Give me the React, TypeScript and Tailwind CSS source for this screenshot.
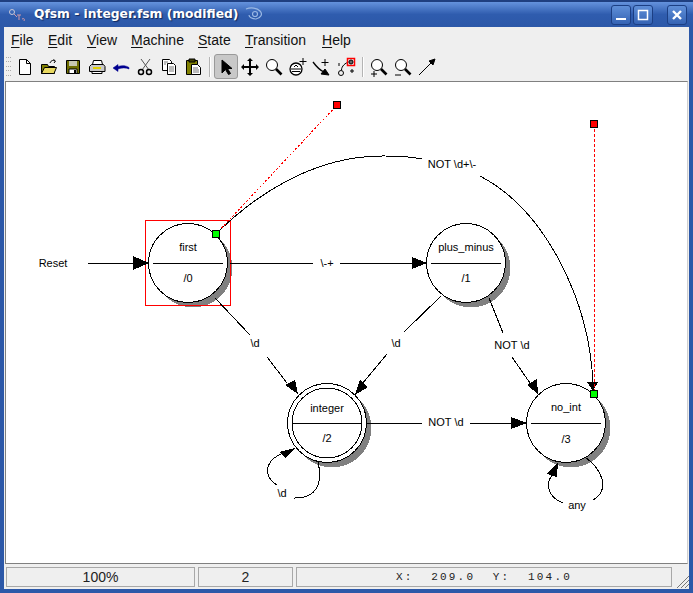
import React from 'react';

const sans = '"Liberation Sans", Arial, sans-serif';

const menus = [
  ['F', 'ile', 'w-[37px]'],
  ['E', 'dit', 'w-[39px]'],
  ['V', 'iew', 'w-[44px]'],
  ['M', 'achine', 'w-[67px]'],
  ['S', 'tate', 'w-[47px]'],
  ['T', 'ransition', 'w-[77px]'],
  ['H', 'elp', 'w-[40px]'],
];

const Glyph: React.FC<{ children: React.ReactNode; active?: boolean }> = ({ children, active }) => (
  <div
    className={
      active
        ? 'w-[24px] h-[25px] flex items-center justify-center rounded-[3px] border border-[#9a9a9a] bg-[#c8c8c8]'
        : 'w-[24px] h-[25px] flex items-center justify-center'
    }
  >
    <svg width="20" height="20" viewBox="0 0 20 20" fill="none" stroke="#000" strokeWidth="1">
      {children}
    </svg>
  </div>
);

const Sep = () => (
  <div className="w-[9px] h-[25px] flex items-center justify-center">
    <div className="w-[2px] h-[20px] border-l border-[#b4b4b4] bg-white" />
  </div>
);

const Lens = () => (
  <>
    <circle cx="8" cy="8" r="5.5" fill="#fff" />
    <path d="M12 12l5.5 5.5" strokeWidth="2.6" />
  </>
);

const Toolbar = () => (
  <div className="h-[29px] flex items-center shrink-0">
    <div className="w-[7px] h-[22px] mr-[2px] flex flex-col justify-between py-[1px]">
      <div className="h-[2px] w-[5px] ml-[2px] border-t border-dotted border-[#aaa]" />
      <div className="h-[2px] w-[5px] ml-[2px] border-t border-dotted border-[#aaa]" />
      <div className="h-[2px] w-[5px] ml-[2px] border-t border-dotted border-[#aaa]" />
      <div className="h-[2px] w-[5px] ml-[2px] border-t border-dotted border-[#aaa]" />
      <div className="h-[2px] w-[5px] ml-[2px] border-t border-dotted border-[#aaa]" />
    </div>
    <Glyph>
      <path d="M4.5 2.5h7l4 4v11h-11z" fill="#fff" />
      <path d="M11.5 2.5v4h4" />
    </Glyph>
    <Glyph>
      <path d="M2.5 7.5h6l1 2h6v7h-13z" fill="#808000" />
      <path d="M2.5 16.5l3-6h12l-2.500 6z" fill="#e8d860" />
      <path d="M11 6c1-3 4-3 5-2M14.500 2.500l2 1.500-1.500 2" />
    </Glyph>
    <Glyph>
      <path d="M3.500 3.500h13v13h-13z" fill="#6f6f00" />
      <path d="M6 4h8v5h-8z" fill="#c8c8b0" stroke="none" />
      <path d="M6 12h8v4.500h-8z" fill="#fff" />
      <path d="M11 13h2v3h-2z" fill="#000" stroke="none" />
    </Glyph>
    <Glyph>
      <path d="M6.500 3.500h8l1 4h-10z" fill="#fff" />
      <path d="M2.500 9.500l2-2h12l1.500 2v5h-15.500z" fill="#c8c8c8" />
      <path d="M5 14.500h10v2h-10z" fill="#fff" />
      <path d="M6 11h8" stroke="#e0d000" strokeWidth="2" />
    </Glyph>
    <Glyph>
      <path d="M2 11l5-3.500v2c4-1.500 8-1 11 1v1.500c-3-1.500-7-1.500-11 0v2.500z" fill="#000090" stroke="#000090" strokeWidth="0.500" />
    </Glyph>
    <Glyph>
      <path d="M15 2L7 13M6 2l8 11" strokeWidth="1" stroke="#555" />
      <circle cx="6" cy="15" r="2.500" strokeWidth="1.500" />
      <circle cx="14" cy="15" r="2.500" strokeWidth="1.500" />
    </Glyph>
    <Glyph>
      <path d="M3.500 2.500h7l2 2v9h-9z" fill="#fff" />
      <path d="M8.500 6.500h6l2 2v9h-8z" fill="#fff" />
      <path d="M10 10h5M10 12h5M10 14h5M5 5h4M5 7h2" stroke="#777" />
    </Glyph>
    <Glyph>
      <path d="M3.500 3.500h11v14h-11z" fill="#808000" />
      <path d="M6 2h6v3h-6z" fill="#404000" />
      <path d="M8.500 7.500h6l3 3v7h-9z" fill="#fff" />
      <path d="M10 11h5M10 13h6M10 15h6" stroke="#777" />
    </Glyph>
    <Sep />
    <Glyph active>
      <path d="M6 3v13l3.500-3.500 3 5 2-1-3-5h4.500z" fill="#000" />
    </Glyph>
    <Glyph>
      <path d="M10 2v16M2 10h16" strokeWidth="2" />
      <path d="M10 1l-3 3h6zM10 19l-3-3h6zM1 10l3-3v6zM19 10l-3-3v6z" fill="#000" stroke="none" />
    </Glyph>
    <Glyph>
      <Lens />
    </Glyph>
    <Glyph>
      <circle cx="8" cy="12" r="6" fill="#fff" strokeWidth="1.300" />
      <path d="M3 12h10M4 14.500h8M6 10l2-2 2 2" />
      <path d="M15 1v7M11.500 4.500h7" />
    </Glyph>
    <Glyph>
      <path d="M1 5c3 4 6 8 11 10" strokeWidth="1.300" />
      <path d="M17 18l-8-1 4-5z" fill="#000" />
      <path d="M13 2v7M9.500 5.500h7" />
    </Glyph>
    <Glyph>
      <circle cx="5" cy="16" r="2.500" />
      <path d="M5.500 13c0-4 4-7 7-8" />
      <path d="M3 6v3M15 13h2v2h-2z" />
      <rect x="11.500" y="1.500" width="7" height="7" stroke="#f00" strokeWidth="1.500" />
      <circle cx="15" cy="5" r="2" fill="#666" />
    </Glyph>
    <Sep />
    <Glyph>
      <Lens />
      <path d="M5 14v6M2 17h6" />
    </Glyph>
    <Glyph>
      <Lens />
      <path d="M2 18h6" />
    </Glyph>
    <Glyph>
      <path d="M2 18L15 5" />
      <path d="M18 2l-6 2 4 4z" fill="#000" />
    </Glyph>
  </div>
);

const states = [
  { x: 188, y: 263, name: 'first', out: '/0', ny: 251, oy: 282 },
  { x: 466, y: 263, name: 'plus_minus', out: '/1', ny: 251, oy: 282 },
  { x: 327, y: 423, name: 'integer', out: '/2', ny: 412, oy: 442 },
  { x: 566, y: 423, name: 'no_int', out: '/3', ny: 411, oy: 443 },
];

const labels: [number, number, string][] = [
  [53, 267, 'Reset'],
  [327, 267, '\\-+'],
  [452, 168, 'NOT \\d+\\-'],
  [255, 347, '\\d'],
  [396, 347, '\\d'],
  [512, 349, 'NOT \\d'],
  [446, 426, 'NOT \\d'],
  [282, 497, '\\d'],
  [577, 509, 'any'],
];

const arrows = [
  '133,256 149,263 133,270',
  '412,257 427,263 412,269',
  '298,394 285,385 295,380',
  '355,395 360,380 368,387',
  '538,394 527,385 537,379',
  '527,423 511,417 511,429',
  '593,391 587,382 598,382',
  '295,448 279,452 285,458',
  '558,462 547,474 557,477',
];

const wires = [
  'M88 263H133',
  'M230 263H313M340 263H412',
  'M366 423H422M470 423H511',
  'M215 298L250 335M267 357L287 383',
  'M441 296L404 332M387 354L362 384',
  'M489 298L503 333M512 357L532 386',
  'M216 234C250 200 310 155 385 156C400 156 412 157 422 159',
  'M480 176C545 210 590 300 593 385',
  'M318 462C323 482 318 499 293 498',
  'M277 485C265 478 262 462 283 453',
  'M585 457C603 470 610 490 593 500',
  'M563 503C548 497 545 485 552 475',
];

const Diagram = () => (
  <svg width="681" height="481" viewBox="6 82 681 481" className="block" style={{ fontFamily: sans }}>
    <g shapeRendering="crispEdges">
      {states.map((s) => (
        <circle key={s.name} cx={s.x + 5} cy={s.y + 5} r="39.500" fill="#808080" />
      ))}
      {states.map((s) => (
        <g key={s.name} stroke="#000" fill="#fff">
          <circle cx={s.x} cy={s.y} r="39.500" />
          {s.name === 'integer' && <circle cx={s.x} cy={s.y} r="35" />}
          <path d={`M${s.x - 35} ${s.y}H${s.x + 35}`} />
        </g>
      ))}
      <rect x="145.500" y="220.500" width="85" height="85" fill="none" stroke="#f00" />
      {wires.map((d) => (
        <path key={d} d={d} fill="none" stroke="#000" />
      ))}
      {arrows.map((p) => (
        <polygon key={p} points={p} fill="#000" />
      ))}
      <path d="M216 234L337 105" stroke="#f00" strokeDasharray="2 2" />
      <path d="M594.500 124V394" stroke="#ff0000" strokeDasharray="3 2" fill="none" />
      <rect x="333.500" y="101.500" width="7" height="7" fill="#f00" stroke="#000" />
      <rect x="590.500" y="120.500" width="7" height="7" fill="#f00" stroke="#000" />
      <rect x="212.500" y="230.500" width="7" height="7" fill="#0f0" stroke="#000" />
      <rect x="590.500" y="390.500" width="7" height="7" fill="#0f0" stroke="#000" />
    </g>
    <g fontSize="11" textAnchor="middle" fill="#000">
      {states.map((s) => (
        <g key={s.name}>
          <text x={s.x} y={s.ny}>{s.name}</text>
          <text x={s.x} y={s.oy}>{s.out}</text>
        </g>
      ))}
      {labels.map(([x, y, t]) => (
        <text key={`${x}-${y}`} x={x} y={y}>{t}</text>
      ))}
    </g>
  </svg>
);

const WinBtn: React.FC<{ children: React.ReactNode; className?: string }> = ({ children, className }) => (
  <div
    className={`w-[20px] h-[20px] rounded-[3px] border border-[#1c3f84] bg-gradient-to-b from-[#5f8fd8] to-[#3563b4] flex items-center justify-center ${className ?? ''}`}
  >
    <svg width="14" height="14" viewBox="0 0 14 14" fill="none" stroke="#fff" strokeWidth="2">
      {children}
    </svg>
  </div>
);

export default function App() {
  return (
    <div className="w-[693px] h-[593px] flex flex-col overflow-hidden bg-[#2c58a8]" style={{ fontFamily: sans }}>
      <div className="h-[27px] flex items-center border-t-2 border-[#1f3f80] bg-gradient-to-b from-[#6593dd] via-[#2f5cae] to-[#2c58a8] pl-[8px] pr-[6px] shrink-0">
        <svg width="18" height="16" viewBox="0 0 18 16" fill="none" stroke="#d09aa8" strokeWidth="1">
          <circle cx="4" cy="5" r="2.500" stroke="#c8c8d8" />
          <path d="M6 7l3 3M9 8h4M11 8v5M14 12c2-1 3 0 2 2" />
        </svg>
        <span className="ml-[8px] text-white text-[12.3px] font-bold whitespace-nowrap [text-shadow:1px_1px_1px_#10275a]" style={{ fontFamily: '"DejaVu Sans", sans-serif' }}>
          Qfsm - integer.fsm (modified)
        </span>
        <svg className="ml-[7px]" width="18" height="18" viewBox="0 0 18 18" fill="none" stroke="#9ab8e4" strokeWidth="1.200">
          <path d="M1 3c5-2 11-1 14 2 3 3 1 7-4 8-4 0-7-2-7-4" />
          <circle cx="10" cy="8" r="2.500" />
        </svg>
        <div className="flex-1" />
        <WinBtn>
          <path d="M2 11h10" />
        </WinBtn>
        <WinBtn className="ml-[2px]">
          <rect x="2.500" y="2.500" width="9" height="9" strokeWidth="1.500" />
        </WinBtn>
        <WinBtn className="ml-[14px]">
          <path d="M3 3l8 8M11 3l-8 8" strokeWidth="2.400" />
        </WinBtn>
      </div>

      <div className="flex-1 mx-[4px] mb-[4px] bg-[#efefef] flex flex-col min-h-0">
        <div className="h-[25px] flex items-center pl-[7px] pt-[2px] text-[14px] text-[#111] shrink-0">
          {menus.map(([key, rest, w]) => (
            <span key={key} className={`${w} whitespace-nowrap`}>
              <span className="underline underline-offset-2">{key}</span>
              {rest}
            </span>
          ))}
        </div>
        <Toolbar />
        <div className="h-[483px] mx-[1px] border border-t-[#808080] border-l-[#808080] border-r-[#d0d0d0] border-b-[#808080] bg-white overflow-hidden shrink-0">
          <Diagram />
        </div>
        <div className="h-[20px] mt-[3px] ml-[2px] flex items-stretch gap-[3px] relative text-[14px] text-[#222]">
          <div className="w-[189px] border border-[#a8a8a8] flex items-center justify-center">100%</div>
          <div className="w-[95px] border border-[#a8a8a8] flex items-center justify-center">2</div>
          <div className="w-[376px] border border-[#a8a8a8] flex items-center justify-center whitespace-pre text-[11px] tracking-[2.2px]" style={{ fontFamily: '"Liberation Mono", monospace' }}>
            X:  209.0  Y:  104.0
          </div>
          <svg className="absolute right-0 bottom-[-1px]" width="12" height="12" viewBox="0 0 12 12" stroke="#777" fill="none">
            <path d="M0 12L12 0M4 12l8-8M8 12l4-4" />
          </svg>
        </div>
      </div>
    </div>
  );
}
